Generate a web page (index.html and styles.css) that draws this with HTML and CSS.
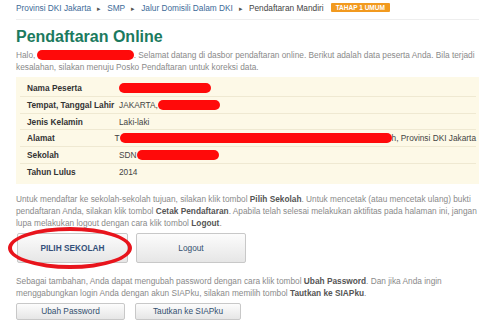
FILE: index.html
```html
<!DOCTYPE html>
<html>
<head>
<meta charset="utf-8">
<link rel="stylesheet" href="styles.css">
</head>
<body>
<div class="page">
  <div class="crumbs">
    <a>Provinsi DKI Jakarta</a><span class="sep">&#9656;</span><a>SMP</a><span class="sep">&#9656;</span><a>Jalur Domisili Dalam DKI</a><span class="sep">&#9656;</span><span class="cur">Pendaftaran Mandiri</span><span class="badge">TAHAP 1 UMUM</span>
  </div>
  <h1 class="title">Pendaftaran Online</h1>
  <p class="intro">Halo, <span class="redact r-halo"></span>. Selamat datang di dasbor pendaftaran online. Berikut adalah data peserta Anda. Bila terjadi kesalahan, silakan menuju Posko Pendaftaran untuk koreksi data.</p>
  <div class="data">
    <div class="row"><div class="lbl">Nama Peserta</div><div class="val"><span class="redact r-nama"></span></div></div>
    <div class="row"><div class="lbl">Tempat, Tanggal Lahir</div><div class="val">JAKARTA,<span class="redact r-ttl"></span></div></div>
    <div class="row"><div class="lbl">Jenis Kelamin</div><div class="val">Laki-laki</div></div>
    <div class="row"><div class="lbl">Alamat</div><div class="val">T<span class="redact r-alamat"></span>h, Provinsi DKI Jakarta</div></div>
    <div class="row"><div class="lbl">Sekolah</div><div class="val">SDN<span class="redact r-sek"></span></div></div>
    <div class="row last"><div class="lbl">Tahun Lulus</div><div class="val">2014</div></div>
  </div>
  <p class="txt p1">Untuk mendaftar ke sekolah-sekolah tujuan, silakan klik tombol <b>Pilih Sekolah</b>. Untuk mencetak (atau mencetak ulang) bukti pendaftaran Anda, silakan klik tombol <b>Cetak Pendaftaran</b>. Apabila telah selesai melakukan aktifitas pada halaman ini, jangan lupa melakukan logout dengan cara klik tombol <b>Logout</b>.</p>
  <div class="btns big">
    <div class="btnwrap">
      <button class="btn primary">PILIH SEKOLAH</button>
      <span class="circle"></span>
    </div>
    <button class="btn logout">Logout</button>
  </div>
  <p class="txt p2">Sebagai tambahan, Anda dapat mengubah password dengan cara klik tombol <b>Ubah Password</b>. Dan jika Anda ingin menggabungkan login Anda dengan akun SIAPku, silakan memilih tombol <b>Tautkan ke SIAPku</b>.</p>
  <div class="btns small">
    <button class="btn sm1">Ubah Password</button>
    <button class="btn sm2">Tautkan ke SIAPku</button>
  </div>
</div>
</body>
</html>
```

FILE: styles.css
```css
html, body {
  margin: 0;
  padding: 0;
  background: #ffffff;
}
body {
  font-family: "Liberation Sans", Arial, Helvetica, sans-serif;
  font-size: 8.3px;
  color: #8a8a8a;
}
.page {
  width: 463px;
  padding-left: 16px;
}
.crumbs {
  height: 19px;
  line-height: 16px;
  border-bottom: 1px solid #eeeeee;
  color: #3d6b98;
  font-size: 8.3px;
  white-space: nowrap;
}
.crumbs .sep {
  color: #555;
  font-size: 7px;
  margin: 0 6px;
}
.crumbs .cur {
  color: #444;
}
.badge {
  display: inline-block;
  margin-left: 7px;
  background: #f29a1f;
  color: #fff;
  font-weight: bold;
  font-size: 6.5px;
  line-height: 9px;
  padding: 0 5px;
  border-radius: 1px;
  vertical-align: 1px;
}
.title {
  margin: 7px 0 0 0;
  font-size: 16px;
  line-height: 20px;
  color: #1b7a5e;
  font-weight: bold;
}
.intro {
  margin: 2px 0 0 0;
  line-height: 12px;
}
.redact {
  display: inline-block;
  height: 10px;
  background: #ff0a0a;
  border-radius: 5px;
  vertical-align: -2px;
}
.r-halo { width: 97px; margin-left: -1px; }
.r-nama { width: 92px; }
.r-ttl { width: 62px; }
.r-alamat { width: 272px; }
.r-sek { width: 82px; }
.data {
  margin-top: 4px;
  background: #fdf9e7;
  padding: 3px 3px 4px 4px;
}
.row {
  display: flex;
  height: 15.8px;
  line-height: 16px;
  border-bottom: 1px solid #efe9d2;
}
.row.last { border-bottom: 0; }
.lbl {
  width: 92px;
  padding-left: 7px;
  font-weight: bold;
  color: #333;
}
.val {
  color: #444;
  white-space: nowrap;
}
.txt {
  margin: 0;
  line-height: 12px;
}
.txt b { color: #555; }
.p1 { margin-top: 9px; }
.btns {
  display: flex;
  gap: 8px;
}
.big { margin-top: 4px; }
.btnwrap {
  position: relative;
  display: flex;
}
.btn {
  font-family: "Liberation Sans", Arial, Helvetica, sans-serif;
  font-size: 8.3px;
  color: #33506f;
  border: 1px solid #c8c8c8;
  border-radius: 2px;
  background: linear-gradient(#fcfcfc, #e6e6e6);
  padding: 0;
  margin: 0;
}
.big .btn { height: 30px; }
.primary { width: 111px; margin-left: 1px; font-weight: bold; color: #34507a; }
.logout { width: 110px; }
.circle {
  position: absolute;
  left: -8px;
  top: -6px;
  width: 116px;
  height: 34px;
  border: 4px solid #e8141c;
  border-radius: 50%;
  pointer-events: none;
}
.p2 { margin-top: 12px; }
.small { margin-top: 4px; gap: 10px; }
.small .btn { height: 17px; }
.sm1 { width: 109px; }
.sm2 { width: 106px; }
```
